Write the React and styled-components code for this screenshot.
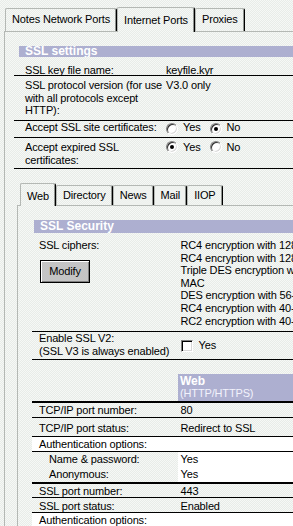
import React from "react";
import styled, { createGlobalStyle, css } from "styled-components";

const dither = css`
  background-color: #eff2ef;
  background-image: repeating-conic-gradient(#e8ece8 0 25%, #f6f8f6 0 50%);
  background-size: 2px 2px;
  background-attachment: fixed;
`;

const GlobalStyle = createGlobalStyle`
  html, body {
    margin: 0;
    padding: 0;
    overflow: hidden;
  }
  body {
    ${dither};
    font-family: "Liberation Sans", Arial, sans-serif;
    font-size: 11px;
    letter-spacing: -0.15px;
    color: #000;
  }
`;

const Page = styled.div`
  width: 330px;
  padding: 8px 0 0 4px;
`;

const TabBar = styled.div`
  display: flex;
  align-items: flex-end;
  height: ${(p) => p.$h}px;
  padding-left: ${(p) => p.$pl}px;
  position: relative;
  z-index: 1;
`;

const Tab = styled.div`
  ${dither};
  box-sizing: border-box;
  height: ${(p) => p.$h}px;
  margin-bottom: ${(p) => (p.$active ? -1 : 0)}px;
  padding: ${(p) => p.$pt}px 6px 0;
  border-top: 1px solid #b4b8b4;
  border-left: 1px solid #b4b8b4;
  border-right: 1px solid #000;
  border-top-left-radius: 2px;
  border-top-right-radius: 2px;
  box-shadow: inset -1px 0 0 #909490;
  line-height: 12.6px;
  white-space: nowrap;
`;

const Panel = styled.div`
  border-top: 1px solid #b4b8b4;
  border-left: 1px solid #b4b8b4;
  padding: 14px 0 0 ${(p) => p.$pl}px;
`;

const SectionHeader = styled.div`
  box-sizing: border-box;
  margin-left: ${(p) => p.$indent}px;
  height: ${(p) => p.$h}px;
  padding: ${(p) => p.$pt}px 0 0 6px;
  background: #adafd0;
  color: #fff;
  font-weight: bold;
  font-size: 12px;
  letter-spacing: 0;
  line-height: ${(p) => p.$lh}px;
  overflow: hidden;
  white-space: nowrap;
`;

const Row = styled.div`
  display: grid;
  grid-template-columns: ${(p) => p.$cols};
  box-sizing: border-box;
  height: ${(p) => p.$h}px;
  border-bottom: ${(p) => p.$bw}px solid #000;
  background: ${(p) => (p.$white ? "#fff" : "transparent")};
  line-height: 12.6px;
  white-space: nowrap;
`;

const Cell = styled.div`
  padding: ${(p) => p.$pt}px 0 0 ${(p) => p.$pl}px;
  background: ${(p) => (p.$white ? "#fff" : "transparent")};
  grid-column: ${(p) => (p.$span ? "1 / -1" : "auto")};
`;

const Choice = styled.div`
  display: flex;
  align-items: flex-start;
  padding: ${(p) => p.$pt}px 0 0 2px;
`;

const Radio = styled.span`
  position: relative;
  flex: none;
  box-sizing: border-box;
  width: 12px;
  height: 12px;
  margin-top: ${(p) => p.$mt}px;
  border-radius: 50%;
  border: 1px solid;
  border-color: #808080 #fff #fff #808080;
  box-shadow: inset 1px 1px 0 #303030, inset -1px -1px 0 #d8d8d8;
  background: #fff;

  &::after {
    content: "";
    display: ${(p) => (p.$checked ? "block" : "none")};
    position: absolute;
    left: 3px;
    top: 3px;
    width: 4px;
    height: 4px;
    border-radius: 50%;
    background: #000;
  }
`;

const ChoiceText = styled.span`
  margin: 0 ${(p) => p.$mr}px 0 5px;
`;

const InnerWidget = styled.div`
  margin: 16px 0 0 3px;
`;

const ModifyButton = styled.button`
  display: block;
  box-sizing: border-box;
  width: 50px;
  height: 23px;
  margin: 8px 0 0 1px;
  padding: 0;
  font: inherit;
  letter-spacing: inherit;
  color: #000;
  background: #c4c4c4;
  border: 1px solid #000;
  box-shadow: inset 1px 1px 0 #fff, inset -1px -1px 0 #808080;
`;

const CheckCell = styled.div`
  display: flex;
  align-items: center;
  padding-left: 2.5px;
`;

const Checkbox = styled.span`
  flex: none;
  box-sizing: border-box;
  width: 12px;
  height: 12px;
  margin-right: 6px;
  border: 1px solid;
  border-color: #808080 #fff #fff #808080;
  box-shadow: inset 1px 1px 0 #000, inset -1px -1px 0 #d8d8d8;
  background: #fff;
`;

const PortsTable = styled.div`
  margin-top: 14px;
`;

const ColumnHead = styled.div`
  padding: 1px 0 0 2px;
  background: #adafd0;
  color: #f2f2fc;
`;

const HeadTitle = styled.div`
  font-weight: bold;
  font-size: 12px;
  line-height: 12px;
  letter-spacing: 0;
  color: #fff;
`;

const topTabs = ["Notes Network Ports", "Internet Ports", "Proxies"];
const innerTabs = ["Web", "Directory", "News", "Mail", "IIOP"];

const ciphers = [
  "RC4 encryption with 128-bit key and MD5 MAC",
  "RC4 encryption with 128-bit key and SHA-1 MAC",
  "Triple DES encryption with 168-bit key and SHA-1",
  "MAC",
  "DES encryption with 56-bit key and SHA-1 MAC",
  "RC4 encryption with 40-bit key and MD5 MAC",
  "RC2 encryption with 40-bit key and MD5 MAC",
];

const portRows = [
  { label: "TCP/IP port number:", value: "80", h: 15, pt: 1, bw: 1 },
  { label: "TCP/IP port status:", value: "Redirect to SSL", h: 19, pt: 4, bw: 1 },
  { label: "Authentication options:", h: 15, pt: 1, bw: 1, white: true },
  { label: "Name & password:", value: "Yes", h: 15, pt: 1, bw: 0, sub: true },
  { label: "Anonymous:", value: "Yes", h: 17, pt: 1, bw: 2, sub: true },
  { label: "SSL port number:", value: "443", h: 14, pt: 1, bw: 1 },
  { label: "SSL port status:", value: "Enabled", h: 15, pt: 2, bw: 1 },
  { label: "Authentication options:", h: 15, pt: 1, bw: 0, white: true },
];

const TOP_COLS = "150px 1fr";
const INNER_COLS = "146px 1fr";

function RadioPair({ yes, pt, rt }) {
  return (
    <Choice $pt={pt}>
      <Radio $mt={rt} $checked={yes} />
      <ChoiceText $mr={9}>Yes</ChoiceText>
      <Radio $mt={rt} $checked={!yes} />
      <ChoiceText $mr={0}>No</ChoiceText>
    </Choice>
  );
}

export default function App() {
  return (
    <Page>
      <GlobalStyle />
      <TabBar $h={23} $pl={1}>
        {topTabs.map((t) => {
          const active = t === "Internet Ports";
          return (
            <Tab key={t} $active={active} $h={active ? 25 : 23} $pt={active ? 5.5 : 3.5}>
              {t}
            </Tab>
          );
        })}
      </TabBar>
      <Panel $pl={9}>
        <SectionHeader $indent={5} $h={11} $pt={0} $lh={11}>
          SSL settings
        </SectionHeader>

        <Row $cols={TOP_COLS} $h={19} $bw={1}>
          <Cell $pt={7} $pl={11}>SSL key file name:</Cell>
          <Cell $pt={7} $pl={2}>keyfile.kyr</Cell>
        </Row>
        <Row $cols={TOP_COLS} $h={45} $bw={1}>
          <Cell $pt={3} $pl={11}>
            SSL protocol version (for use
            <br />
            with all protocols except
            <br />
            HTTP):
          </Cell>
          <Cell $pt={3} $pl={2}>V3.0 only</Cell>
        </Row>
        <Row $cols={TOP_COLS} $h={17} $bw={1}>
          <Cell $pt={0} $pl={11}>Accept SSL site certificates:</Cell>
          <RadioPair yes={false} pt={0} rt={2} />
        </Row>
        <Row $cols={TOP_COLS} $h={31} $bw={1}>
          <Cell $pt={3} $pl={11}>
            Accept expired SSL
            <br />
            certificates:
          </Cell>
          <RadioPair yes pt={3} rt={0} />
        </Row>

        <InnerWidget>
          <TabBar $h={20} $pl={3}>
            {innerTabs.map((t) => {
              const active = t === "Web";
              return (
                <Tab key={t} $active={active} $h={active ? 23 : 20} $pt={active ? 6 : 3}>
                  {t}
                </Tab>
              );
            })}
          </TabBar>
          <Panel $pl={14}>
            <SectionHeader $indent={2} $h={13} $pt={0} $lh={13}>
              SSL Security
            </SectionHeader>
            <Row $cols={INNER_COLS} $h={99} $bw={1}>
              <Cell $pt={6} $pl={7}>
                SSL ciphers:
                <ModifyButton type="button">Modify</ModifyButton>
              </Cell>
              <Cell $pt={6} $pl={2.5}>
                {ciphers.map((c) => (
                  <div key={c}>{c}</div>
                ))}
              </Cell>
            </Row>
            <Row $cols={INNER_COLS} $h={28} $bw={1}>
              <Cell $pt={0} $pl={7}>
                Enable SSL V2:
                <br />
                (SSL V3 is always enabled)
              </Cell>
              <CheckCell>
                <Checkbox />
                Yes
              </CheckCell>
            </Row>

            <PortsTable>
              <Row $cols={INNER_COLS} $h={29} $bw={2}>
                <div />
                <ColumnHead>
                  <HeadTitle>Web</HeadTitle>
                  (HTTP/HTTPS)
                </ColumnHead>
              </Row>
              {portRows.map((r, i) => (
                <Row key={i} $cols={INNER_COLS} $h={r.h} $bw={r.bw} $white={r.white}>
                  {r.value === undefined ? (
                    <Cell $span $pt={r.pt} $pl={7}>
                      {r.label}
                    </Cell>
                  ) : (
                    <>
                      <Cell $pt={r.pt} $pl={r.sub ? 17 : 7}>
                        {r.label}
                      </Cell>
                      <Cell $pt={r.pt} $pl={2.5} $white={r.sub}>
                        {r.value}
                      </Cell>
                    </>
                  )}
                </Row>
              ))}
            </PortsTable>
          </Panel>
        </InnerWidget>
      </Panel>
    </Page>
  );
}
